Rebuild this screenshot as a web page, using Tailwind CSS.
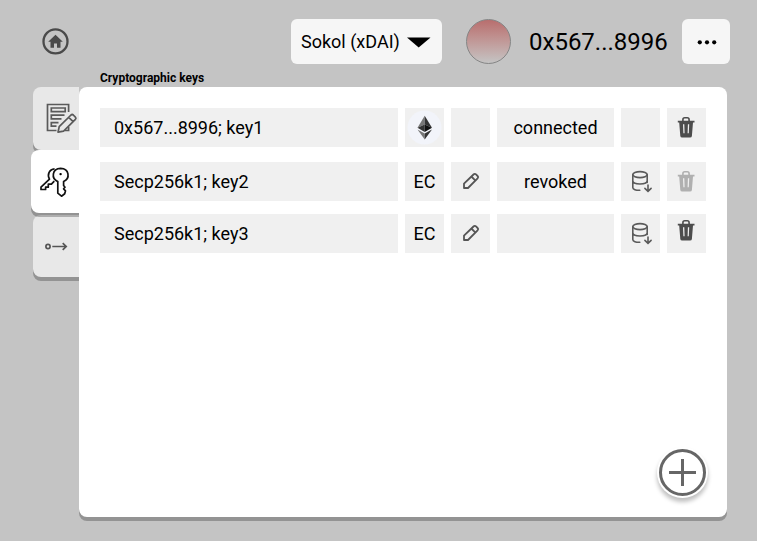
<!DOCTYPE html>
<html lang="en">
<head>
<meta charset="utf-8">
<title>Cryptographic keys</title>
<script src="https://cdn.jsdelivr.net/npm/@tailwindcss/browser@4"></script>
</head>
<body class="h-[541px] w-[757px] overflow-hidden bg-[#c4c4c4] font-[Roboto,sans-serif] text-black">
<svg class="hidden">
  <symbol id="pencil" viewBox="0 0 39 39"><g fill="none" stroke="#555" stroke-width="1.8" stroke-linejoin="round"><path d="M13 26V21.6L22.5 12.5Q23.8 11.2 25 12.4L26.6 14Q27.8 15.2 26.6 16.4L17 26Z"/><path d="M20.3 14.5 24.5 18.7"/></g></symbol>
  <symbol id="db" viewBox="0 0 39 39"><g fill="none" stroke="#5a5a5a" stroke-width="1.6" stroke-linecap="round"><ellipse cx="19" cy="12.6" rx="7.2" ry="3"/><path d="M11.8 12.7V25.5C11.8 27.6 15 28.4 18.8 28.3M26.2 12.7V20.5M11.8 18.8C11.8 23 26.2 23 26.2 18.8"/><path d="M27 23V29.2M23.9 26.4 27 29.4 30.1 26.4"/></g></symbol>
  <symbol id="trash" viewBox="0 0 39 39"><path d="M15.9 13V11.7Q15.9 9.8 17.7 9.8H20.3Q22.1 9.8 22.1 11.7V13" fill="none" stroke="currentColor" stroke-width="1.6"/><path fill="currentColor" fill-rule="evenodd" d="M10.8 12.8H27.5V14.6H26L24.9 27.9Q24.7 29.6 23 29.6H15.2Q13.5 29.6 13.3 27.9L12.2 14.6H10.8ZM16 16.2 16.4 25.2H17.6L17.3 16.2ZM20.9 16.2 20.6 25.2H21.8L22.2 16.2Z"/></symbol>
</svg>

<header class="flex h-[68px] items-start pt-[19px] pl-[42px]">
  <svg class="mt-[9px] h-[27px] w-[27px] shrink-0" viewBox="42 28 27 27"><circle cx="55.5" cy="41.4" r="12" fill="none" stroke="#4a4a4a" stroke-width="2.3"/><path fill="#4a4a4a" d="M55.5 34.8 62.8 41.7H60.5V47.8H57V43.4H54V47.8H50.5V41.7H48.2Z"/></svg>
  <button class="ml-[222px] flex h-[45px] w-[151px] shrink-0 items-center rounded-md bg-[#f6f6f6] pl-[10px] text-[18px]">
    <span class="w-[106px] text-left whitespace-nowrap">Sokol (xDAI)</span>
    <svg class="mt-[1px] h-[11px] w-[24px]" viewBox="0 0 24 11"><path d="M0 .5H23.5L11.7 10.5Z"/></svg>
  </button>
  <div class="ml-[24px] h-[45px] w-[45px] shrink-0 rounded-full border border-[#858585] bg-linear-to-b from-[#b86e6e] to-[#c4c4c4]"></div>
  <div class="ml-[18px] w-[153px] shrink-0 pt-[1px] text-[24px] leading-[45px]">0x567...8996</div>
  <button class="flex h-[45px] w-[48px] shrink-0 items-center justify-center rounded-md bg-[#f6f6f6] pl-[2px]">
    <svg class="h-[6px] w-[20px]" viewBox="0 0 20 6"><circle cx="2.8" cy="3.3" r="2.1"/><circle cx="10" cy="3.3" r="2.1"/><circle cx="17.2" cy="3.3" r="2.1"/></svg>
  </button>
</header>
<h1 class="h-[19px] pt-[1px] pl-[100px] text-[12px] leading-[19px] font-bold">Cryptographic keys</h1>

<div class="flex">
  <nav class="flex w-[79px] flex-col items-end overflow-x-clip">
    <div class="h-[63px] w-[46px] rounded-l-lg bg-[#e8e8e8] shadow-[0_4px_0_rgba(0,0,0,0.25)]">
      <svg class="h-[63px] w-[46px]" viewBox="33 87 46 63"><g fill="none" stroke="#5a5a5a" stroke-width="1.7"><path d="M68.6 112V104.5H47.5V130.5H56.5M68.6 127V130.5H65"/><path d="M51.3 108H65.2V111.6H51.3ZM64.5 115.2H51.3V118.9H61.5M58.5 122.6H51.3V126.2H56.5"/><path stroke-linejoin="round" d="M58 132.2 59.2 126.7 71 115Q72.2 114 73.3 115L75.4 117.2Q76.5 118.3 75.4 119.4L63.6 131.1ZM68.7 117.3 73.1 121.7"/></g></svg>
    </div>
    <div class="z-10 h-[63px] w-[48px] rounded-l-lg bg-white shadow-[0_4px_0_rgba(0,0,0,0.25)]">
      <svg class="h-[63px] w-[48px]" viewBox="31 150 48 63"><g fill="none" stroke="#111" stroke-width="1.7" stroke-linejoin="round"><path d="M57.8 181.6C50.9 178.5 52 168.5 60.6 168.3 69.4 168.5 70.4 178.5 63.6 181.6V185.5L65 187.2 63.6 188.8 65.5 190.8 64.7 193.8 61.5 196.2 57.8 193.2Z"/><path d="M54.6 168.8C49 169.3 47 175.1 49.5 179.2L41 187.2V189.5H45.6V187.2H48.3V184.2H51.4L54.3 181.2"/></g><circle cx="60.6" cy="174.1" r="1.2"/></svg>
    </div>
    <div class="mt-[1.5px] h-[62.5px] w-[46px] rounded-l-lg bg-[#e8e8e8] shadow-[0_4px_0_rgba(0,0,0,0.25)]">
      <svg class="h-[62px] w-[46px]" viewBox="33 214.5 46 62"><g fill="none" stroke="#555" stroke-width="1.7"><circle cx="48" cy="246" r="2.1"/><path d="M52.3 246H66M62.7 242.6 66.2 246 62.7 249.4"/></g></svg>
    </div>
  </nav>

  <main class="z-20 flex h-[430px] w-[648px] flex-col rounded-lg bg-white px-[21px] pt-[21px] shadow-[0_4px_0_rgba(0,0,0,0.25)]">
    <div class="grid grid-cols-[298px_39px_39px_117px_39px_39px] gap-x-[7px] text-[18px] leading-[39px] *:h-[39px] *:bg-[#f0f0f0]">
      <div class="pl-[14px]">0x567...8996; key1</div>
      <div><svg class="h-[39px] w-[39px]" viewBox="0 0 39 39"><circle cx="19.5" cy="19.5" r="17" fill="#f2f4fa"/><path fill="#777" d="M19.7 7.8 12.5 19.7 19.7 16.5Z"/><path fill="#343434" d="M19.7 7.8V16.5L27 19.7Z"/><path fill="#333" d="M12.5 19.7 19.7 16.5V24Z"/><path fill="#111" d="M27 19.7 19.7 16.5V24Z"/><path fill="#777" d="M12.5 21.4 19.7 25.5V31.5Z"/><path fill="#343434" d="M27 21.4 19.7 25.5V31.5Z"/></svg></div>
      <div></div>
      <div class="text-center">connected</div>
      <div></div>
      <div class="text-[#4d4d4d]"><svg class="h-[39px] w-[39px]"><use href="#trash"/></svg></div>
    </div>
    <div class="mt-[15px] grid grid-cols-[298px_39px_39px_117px_39px_39px] gap-x-[7px] text-[18px] leading-[39px] *:h-[39px] *:bg-[#f0f0f0]">
      <div class="pl-[14px]">Secp256k1; key2</div>
      <div class="text-center">EC</div>
      <div><svg class="h-[39px] w-[39px]"><use href="#pencil"/></svg></div>
      <div class="text-center">revoked</div>
      <div><svg class="h-[39px] w-[39px]"><use href="#db"/></svg></div>
      <div class="text-[#b0b0b0]"><svg class="h-[39px] w-[39px]"><use href="#trash"/></svg></div>
    </div>
    <div class="mt-[13px] grid grid-cols-[298px_39px_39px_117px_39px_39px] gap-x-[7px] text-[18px] leading-[39px] *:h-[39px] *:bg-[#f0f0f0]">
      <div class="pl-[14px]">Secp256k1; key3</div>
      <div class="text-center">EC</div>
      <div><svg class="h-[39px] w-[39px]"><use href="#pencil"/></svg></div>
      <div></div>
      <div><svg class="h-[39px] w-[39px]"><use href="#db"/></svg></div>
      <div class="text-[#4d4d4d]"><svg class="h-[39px] w-[39px]" viewBox="0 3 39 39"><use href="#trash" width="39" height="39"/></svg></div>
    </div>
    <button class="mt-auto -mr-[2px] mb-[19px] h-[51px] w-[51px] self-end rounded-full bg-white shadow-[0_4px_4px_rgba(0,0,0,0.25)]">
      <svg class="h-[51px] w-[51px]" viewBox="0 0 51 51" fill="none" stroke="#666"><circle cx="25.5" cy="25.5" r="22" stroke-width="3"/><path stroke-width="3" d="M25.5 12V39M12 25.5H39"/></svg>
    </button>
  </main>
</div>
</body>
</html>
